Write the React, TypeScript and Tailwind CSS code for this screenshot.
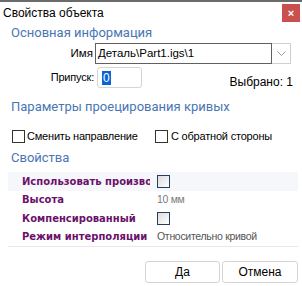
import React from 'react';

const ui = { fontFamily: '"Liberation Sans", Arial, sans-serif' };
const head = { fontFamily: 'Roboto, "Noto Sans", sans-serif' };
const gridLabel = { fontFamily: '"DejaVu Sans", Verdana, sans-serif' };

function Box() {
  return (
    <span className="inline-block w-[13px] h-[13px] border border-[#243f63] bg-gradient-to-br from-[#dcdcdc] to-white" />
  );
}

export default function App() {
  const rows = [
    { label: 'Использовать производные', value: <Box />, shade: true },
    { label: 'Высота', value: <span className="text-[#7a7a7a]">10 мм</span> },
    { label: 'Компенсированный', value: <Box /> },
    { label: 'Режим интерполяции', value: <span className="text-[#555]">Относительно кривой</span> },
  ];

  return (
    <div className="w-[302px] h-[286px] bg-white border-t-2 border-[#6b6b6b] flex flex-col text-black" style={ui}>
      {/* Title bar */}
      <div className="flex items-center justify-between pl-[3px] pr-[2px] h-[22px]">
        <span className="text-[12px] leading-none">Свойства объекта</span>
        <button className="w-[18px] h-[18px] bg-[#c9504f] text-white text-[11px] font-bold flex items-center justify-center leading-none">
          ×
        </button>
      </div>

      {/* Основная информация */}
      <div className="px-[11px] mt-[1px] text-[13px] leading-[16px] text-[#4876b4] whitespace-nowrap" style={head}>Основная информация</div>
      <div className="flex items-center mt-[2px] h-[21px]">
        <span className="w-[95px] text-right text-[11.5px] pr-[2px]">Имя</span>
        <div className="flex h-[21px]">
          <div className="w-[177px] border border-[#606060] text-[11.5px] leading-[19px] pl-[2px]">Деталь\Part1.igs\1</div>
          <div className="w-[19px] border border-l-0 border-[#cfcfcf] flex items-center justify-center">
            <svg width="9" height="5" viewBox="0 0 9 5"><path d="M0.5 0.5 L4.5 4.5 L8.5 0.5" fill="none" stroke="#9a9a9a" /></svg>
          </div>
        </div>
      </div>
      <div className="flex items-center mt-[3px] h-[21px]">
        <span className="w-[97px] text-right text-[11px] tracking-[-0.2px] pr-[3px]">Припуск:</span>
        <div className="w-[45px] h-[21px] border border-[#d4d4d4] rounded-[3px] flex items-center pl-[4px]">
          <span className="bg-[#0a64d6] text-white text-[12px] leading-[14px] px-[1px]">0</span>
        </div>
        <span className="ml-auto pr-[9px] text-[12px] mt-[8px]">Выбрано: 1</span>
      </div>

      {/* Параметры */}
      <div className="px-[11px] mt-[11px] text-[13px] leading-[16px] text-[#4876b4] whitespace-nowrap" style={head}>Параметры проецирования кривых</div>
      <div className="flex items-center mt-[13px] text-[11px] tracking-[-0.2px] h-[16px] whitespace-nowrap">
        <label className="flex items-center ml-[12px] w-[143px] gap-[2px] shrink-0">
          <span className="inline-block w-[13px] h-[13px] border border-[#333]" />
          Сменить направление
        </label>
        <label className="flex items-center gap-[3px]">
          <span className="inline-block w-[13px] h-[13px] border border-[#333]" />
          С обратной стороны
        </label>
      </div>

      {/* Свойства */}
      <div className="px-[11px] mt-[6px] text-[13px] leading-[16px] text-[#4876b4]" style={head}>Свойства</div>
      <div className="ml-[8px] mr-[4px] mt-[6px] border-b border-[#e8e8e8]">
        {rows.map((r) => (
          <div key={r.label} className={`flex items-center h-[18.5px] ${r.shade ? 'bg-[#f6f7fb]' : ''}`}>
            <span
              className="w-[142px] shrink-0 pl-[14px] font-bold text-[10px] text-[#6b116b] whitespace-nowrap overflow-hidden"
              style={gridLabel}
            >
              {r.label}
            </span>
            <span className="pl-[7px] flex items-center text-[10.5px] tracking-[-0.3px] whitespace-nowrap">{r.value}</span>
          </div>
        ))}
      </div>

      {/* Buttons */}
      <div className="flex justify-end gap-[2px] pr-[4px] mt-[14px] text-[12px]">
        <button className="w-[75px] h-[22px] border border-[#d4d4d4] rounded-[3px]">Да</button>
        <button className="w-[76px] h-[22px] border border-[#d4d4d4] rounded-[3px]">Отмена</button>
      </div>
    </div>
  );
}
